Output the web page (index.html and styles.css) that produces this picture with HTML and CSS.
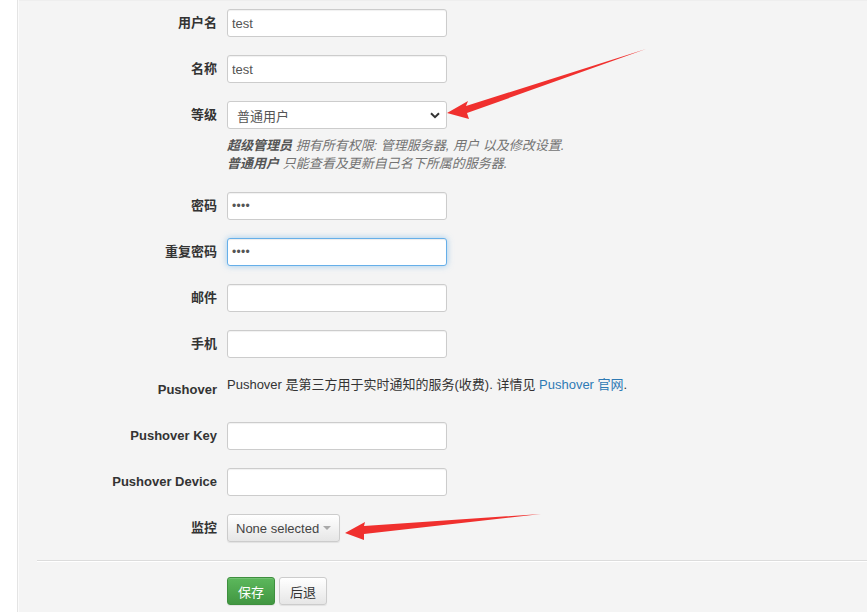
FILE: index.html
```html
<!DOCTYPE html>
<html lang="zh">
<head>
<meta charset="utf-8">
<link rel="stylesheet" href="styles.css">
</head>
<body>
<div class="page">
  <div class="side"></div>
  <main class="main">
    <form class="form">
      <div class="row"><label class="lbl">用户名</label><div class="ctl"><input class="inp" type="text" value="test"></div></div>
      <div class="row"><label class="lbl">名称</label><div class="ctl"><input class="inp" type="text" value="test"></div></div>
      <div class="row"><label class="lbl">等级</label><div class="ctl">
        <div class="sel"><span>普通用户</span><svg class="chev" width="10" height="7" viewBox="0 0 10 7"><path d="M1 1.2 L5 5.2 L9 1.2" fill="none" stroke="#333" stroke-width="2"/></svg></div>
      </div></div>
      <div class="help"><div></div><div class="help-text"><b>超级管理员</b> 拥有所有权限: 管理服务器, 用户 以及修改设置.<br><b>普通用户</b> 只能查看及更新自己名下所属的服务器.</div></div>
      <div class="row"><label class="lbl">密码</label><div class="ctl"><div class="inp pw">••••</div></div></div>
      <div class="row"><label class="lbl">重复密码</label><div class="ctl"><div class="inp pw focus">••••</div></div></div>
      <div class="row"><label class="lbl">邮件</label><div class="ctl"><div class="inp"></div></div></div>
      <div class="row"><label class="lbl">手机</label><div class="ctl"><div class="inp"></div></div></div>
      <div class="row static"><label class="lbl">Pushover</label><div class="ctl stext">Pushover 是第三方用于实时通知的服务(收费). 详情见 <a class="link">Pushover 官网</a>.</div></div>
      <div class="row"><label class="lbl">Pushover Key</label><div class="ctl"><div class="inp"></div></div></div>
      <div class="row"><label class="lbl">Pushover Device</label><div class="ctl"><div class="inp"></div></div></div>
      <div class="row"><label class="lbl">监控</label><div class="ctl"><div class="btn ms">None selected <span class="caret"></span></div></div></div>
      <div class="actions-wrap">
        <div class="hr"></div>
        <div class="actions"><div></div><div class="btns"><div class="btn green">保存</div><div class="btn">后退</div></div></div>
      </div>
    </form>
  </main>
  <svg class="arrows" width="867" height="612" viewBox="0 0 867 612">
    <polygon fill="#f0302e" points="646,49 466,106 468,101 447,113 469,119 467,113"/>
    <polygon fill="#f0302e" points="541,514 364,526 365,522 345,533 364,540 364,534"/>
  </svg>
</div>
</body>
</html>
```
FILE: styles.css
```css
* { box-sizing: border-box; }
html, body { margin: 0; padding: 0; }
body {
  font-family: "Liberation Sans", "Noto Sans CJK SC", sans-serif;
  font-size: 13px;
  color: #333;
  background: #fff;
}
.page {
  position: relative;
  display: flex;
  width: 867px;
  height: 612px;
  overflow: hidden;
}
.side { width: 17px; flex: none; background: #fff; }
.main {
  flex: 1;
  background: #f4f4f4;
  border-left: 1px solid #e4e4e4;
  box-shadow: inset 1px 0 0 #fbfbfb, inset 0 1px 0 #eee;
  padding-top: 9px;
}
.form { display: flex; flex-direction: column; }
.row {
  display: grid;
  grid-template-columns: 199px 220px;
  column-gap: 10px;
  align-items: center;
  height: 28px;
  margin-bottom: 18px;
}
.lbl {
  text-align: right;
  font-weight: bold;
  font-size: 13px;
  line-height: 18px;
}
.inp {
  display: block;
  width: 220px;
  height: 28px;
  border: 1px solid #ccc;
  border-radius: 3px;
  background: #fff;
  padding: 0 4px;
  font: 13px "Liberation Sans", "Noto Sans CJK SC", sans-serif;
  color: #555;
  line-height: 26px;
  box-shadow: inset 0 1px 1px rgba(0,0,0,.06);
}
input.inp { outline: none; }
.pw { font-size: 12px; letter-spacing: 0.3px; color: #555; padding-left: 4px; }
.focus {
  border-color: #66afe9;
  box-shadow: inset 0 1px 1px rgba(0,0,0,.075), 0 0 6px rgba(102,175,233,.6);
}
.sel {
  display: flex;
  align-items: center;
  justify-content: space-between;
  width: 220px;
  height: 28px;
  border: 1px solid #ccc;
  border-radius: 3px;
  background: #fff;
  padding: 0 6px 0 9px;
  color: #555;
}
.sel span { font-size: 13px; }
.chev { display: block; }
.help {
  display: grid;
  grid-template-columns: 199px 260px;
  column-gap: 10px;
  margin-top: -10px;
  margin-bottom: 19px;
}
.help-text {
  font-style: italic;
  color: #737373;
  line-height: 18px;
  font-size: 13px;
  white-space: nowrap;
}
.help-text b { color: #555; font-weight: bold; }
.static { align-items: start; height: 28px; }
.static .lbl { padding-top: 5px; }
.stext { white-space: nowrap; line-height: 18px; padding-top: 0; }
.link { color: #2f7ab4; }
.btn {
  display: inline-flex;
  align-items: center;
  justify-content: center;
  height: 28px;
  padding: 0 8px;
  border: 1px solid #ccc;
  border-radius: 3px;
  background: linear-gradient(#fff, #e6e6e6);
  color: #333;
  font-size: 13px;
  white-space: nowrap;
  box-shadow: inset 0 1px 0 rgba(255,255,255,.15), 0 1px 1px rgba(0,0,0,.075);
}
.ms { width: 113px; padding: 0 8px; justify-content: flex-start; color: #444; }
.caret {
  display: inline-block;
  margin-left: 4px;
  width: 0; height: 0;
  border-left: 4px solid transparent;
  border-right: 4px solid transparent;
  border-top: 4px solid #aaa;
}
.actions-wrap { margin-top: 0; }
.hr {
  margin-left: 19px;
  height: 2px;
  border-top: 1px solid #dcdcdc;
  border-bottom: 1px solid #fff;
}
.actions {
  display: grid;
  grid-template-columns: 199px 220px;
  column-gap: 10px;
  margin-top: 15px;
}
.btns { display: flex; gap: 4px; }
.green {
  width: 48px;
  background: linear-gradient(#5cb85c, #419641);
  border-color: #3e8f3e;
  color: #fff;
}
.btns .btn:not(.green) { width: 48px; }
.arrows {
  position: absolute;
  left: 0; top: 0;
  pointer-events: none;
}
```
